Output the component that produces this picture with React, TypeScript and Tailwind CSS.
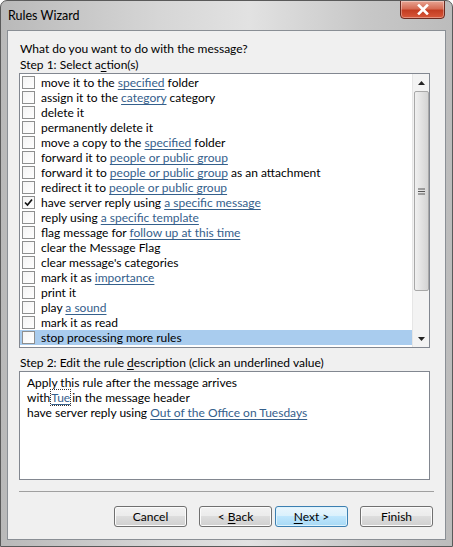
import React from 'react';

type Seg = string | { link: string };

const actions: { parts: Seg[]; checked?: boolean; selected?: boolean }[] = [
  { parts: ['move it to the ', { link: 'specified' }, ' folder'] },
  { parts: ['assign it to the ', { link: 'category' }, ' category'] },
  { parts: ['delete it'] },
  { parts: ['permanently delete it'] },
  { parts: ['move a copy to the ', { link: 'specified' }, ' folder'] },
  { parts: ['forward it to ', { link: 'people or public group' }] },
  { parts: ['forward it to ', { link: 'people or public group' }, ' as an attachment'] },
  { parts: ['redirect it to ', { link: 'people or public group' }] },
  { parts: ['have server reply using ', { link: 'a specific message' }], checked: true },
  { parts: ['reply using ', { link: 'a specific template' }] },
  { parts: ['flag message for ', { link: 'follow up at this time' }] },
  { parts: ['clear the Message Flag'] },
  { parts: ["clear message's categories"] },
  { parts: ['mark it as ', { link: 'importance' }] },
  { parts: ['print it'] },
  { parts: ['play ', { link: 'a sound' }] },
  { parts: ['mark it as read'] },
  { parts: ['stop processing more rules'], selected: true },
];

function Link({ children }: { children: React.ReactNode }) {
  return <span className="text-[#35608c] underline underline-offset-2 decoration-[#35608c]">{children}</span>;
}

function Checkbox({ checked }: { checked?: boolean }) {
  return (
    <span className="w-[13px] h-[13px] border border-[#8e8f8f] bg-[linear-gradient(135deg,#f4f4f4,#ffffff)] flex items-center justify-center shrink-0">
      {checked && (
        <svg width="9" height="9" viewBox="0 0 9 9">
          <path d="M1 4.5 L3.5 7 L8 1.5" fill="none" stroke="#111" strokeWidth="1.7" />
        </svg>
      )}
    </span>
  );
}

function Button({ children, primary }: { children: React.ReactNode; primary?: boolean }) {
  return (
    <button
      className={
        primary
          ? 'w-[73px] h-[21px] rounded-[3px] border border-[#3c7fb1] bg-[linear-gradient(to_bottom,#eaf6fd_0%,#d9f0fc_50%,#bee6fd_50%,#a7d9f5_100%)] shadow-[inset_0_0_0_1px_#dff3fc] text-black'
          : 'w-[73px] h-[21px] rounded-[3px] border border-[#707070] bg-[linear-gradient(to_bottom,#f2f2f2_0%,#ebebeb_50%,#dddddd_50%,#cfcfcf_100%)] shadow-[inset_0_0_0_1px_#fbfbfb] text-black'
      }
    >
      {children}
    </button>
  );
}

export default function App() {
  return (
    <div className="w-[453px] h-[547px] rounded-t-[7px] bg-[linear-gradient(to_right,#b9b9b9_0%,#d6d6d6_35%,#e2e2e2_55%,#c8c8c8_80%,#bcbcbc_100%)] border border-[#5a5a5a] flex flex-col text-[12px] leading-[15px] text-black [font-family:Lato,'Noto_Sans',sans-serif] overflow-hidden">
      {/* title bar */}
      <div className="h-[29px] flex items-start justify-between">
        <span className="pl-[7px] pt-[7px] text-[12.5px]">Rules Wizard</span>
        <div className="mr-[7px] w-[45px] h-[19px] -mt-px rounded-b-[4px] border border-[#6b2a20] bg-[linear-gradient(to_bottom,#e8a493_0%,#d66c55_45%,#c33d22_55%,#d8583a_100%)] flex items-center justify-center shadow-[inset_0_0_0_1px_rgba(255,255,255,0.35)]">
          <svg width="12" height="11" viewBox="0 0 12 11">
            <path d="M2 1.5 L10 9.5 M10 1.5 L2 9.5" stroke="#ffffff" strokeWidth="2.6" strokeLinecap="square" />
          </svg>
        </div>
      </div>

      {/* client area */}
      <div className="mx-[6px] mb-[6px] flex-1 border border-[#8a8f95] bg-[#f0f0f0] flex flex-col pl-[11px] pr-[15px] pt-[10px]">
        <div className="pl-px">What do you want to do with the message?</div>
        <div className="pl-px mt-px">
          Step 1: Select a<span className="underline underline-offset-2">c</span>tion(s)
        </div>

        <div className="mt-[1px] h-[275px] border border-[#828790] bg-white flex">
          <div className="flex-1 pt-[1px] flex flex-col">
            {actions.map((a, i) => (
              <div
                key={i}
                className={`h-[15px] flex items-center gap-[6px] pl-[2px] ${a.selected ? 'bg-[#a9ccee]' : ''}`}
              >
                <Checkbox checked={a.checked} />
                <span className="whitespace-nowrap">
                  {a.parts.map((p, j) => (typeof p === 'string' ? <span key={j}>{p}</span> : <Link key={j}>{p.link}</Link>))}
                </span>
              </div>
            ))}
          </div>
          {/* scrollbar */}
          <div className="w-[17px] bg-[#f3f3f3] border-l border-[#e6e6e6] flex flex-col items-center">
            <div className="h-[17px] flex items-center justify-center">
              <svg width="7" height="4" viewBox="0 0 7 4">
                <path d="M0 4 L3.5 0 L7 4 Z" fill="#222" />
              </svg>
            </div>
            <div className="w-[15px] h-[200px] rounded-[2px] border border-[#a8a8a8] bg-[linear-gradient(to_right,#f0f0f0,#e2e2e2_50%,#d4d4d4)] flex items-center justify-center">
              <svg width="7" height="7" viewBox="0 0 7 7">
                <path d="M0 1 H7 M0 3.5 H7 M0 6 H7" stroke="#555" strokeWidth="1" />
              </svg>
            </div>
            <div className="flex-1" />
            <div className="h-[17px] flex items-center justify-center">
              <svg width="7" height="4" viewBox="0 0 7 4">
                <path d="M0 0 L7 0 L3.5 4 Z" fill="#222" />
              </svg>
            </div>
          </div>
        </div>

        <div className="pl-px mt-[7px]">
          Step 2: Edit the rule <span className="underline underline-offset-2">d</span>escription (click an underlined value)
        </div>
        <div className="mt-px h-[109px] border border-[#828790] bg-white pl-[7px] pt-[3px] leading-[15px]">
          <div>Apply this rule after the message arrives</div>
          <div>
            with<span className="outline-1 outline-dotted outline-[#333] ml-[1px] mr-[2px]"><Link>Tue</Link></span>in the message header
          </div>
          <div>
            have server reply using <Link>Out of the Office on Tuesdays</Link>
          </div>
        </div>

        <div className="mt-[11px] h-px bg-[#a0a0a0] mr-[-4px]" />

        <div className="mt-[14px] flex justify-end mr-[-3px]">
          <Button>Cancel</Button>
          <div className="w-[12px]" />
          <Button>
            &lt; <span className="underline underline-offset-2">B</span>ack
          </Button>
          <div className="w-[3px]" />
          <Button primary>
            <span className="underline underline-offset-2">N</span>ext &gt;
          </Button>
          <div className="w-[12px]" />
          <Button>Finish</Button>
        </div>
      </div>
    </div>
  );
}
